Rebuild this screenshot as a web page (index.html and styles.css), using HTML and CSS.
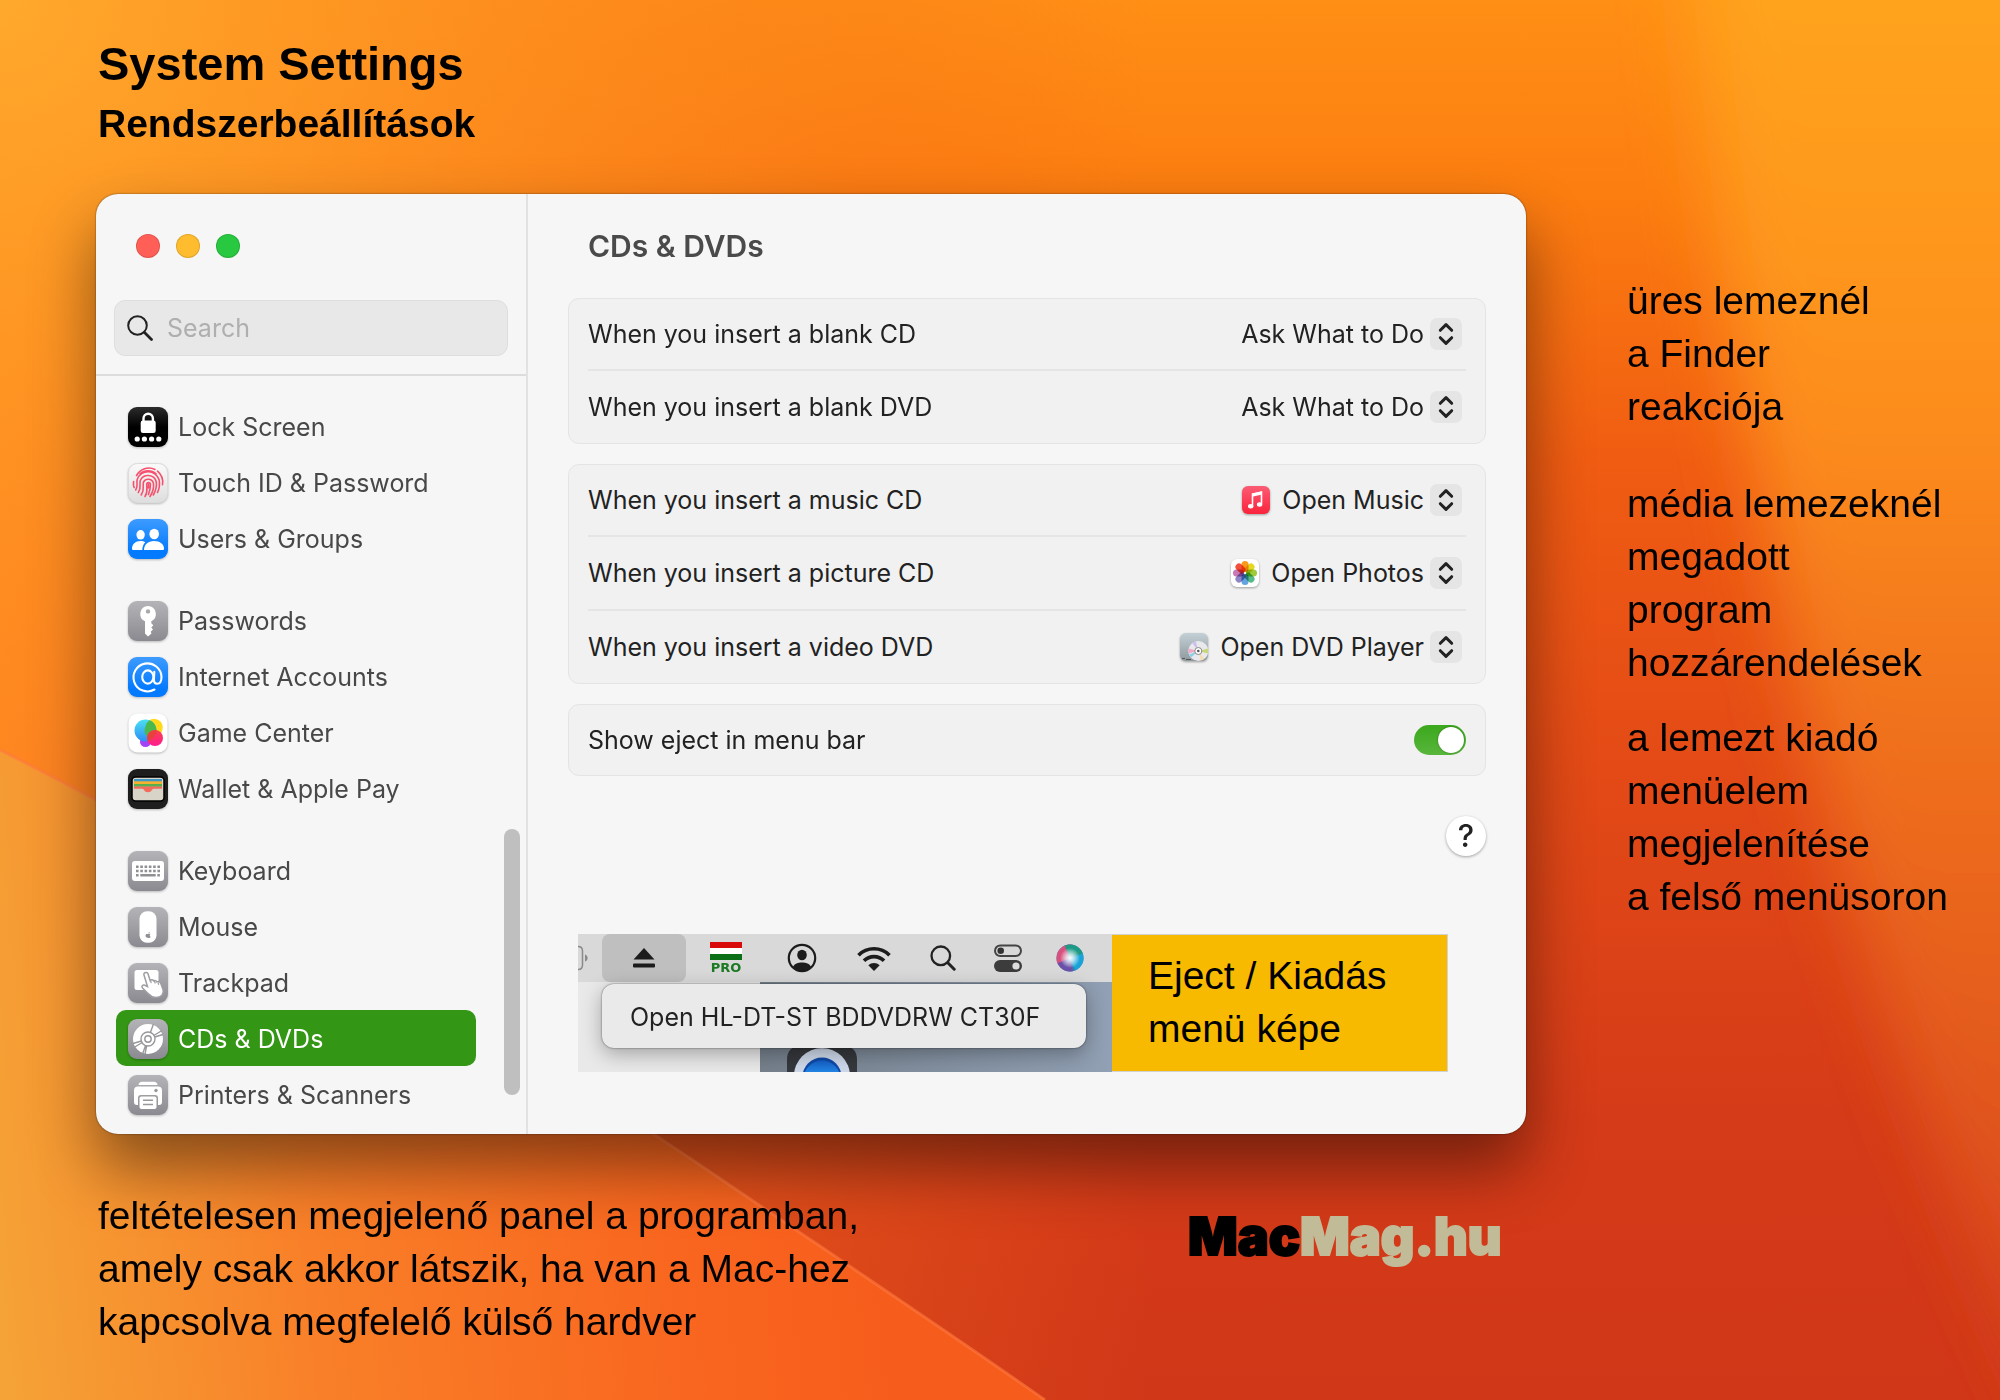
FILE: index.html
```html
<!DOCTYPE html>
<html lang="hu">
<head>
<meta charset="utf-8">
<title>System Settings – CDs &amp; DVDs</title>
<link rel="stylesheet" href="styles.css">
</head>
<body>
<svg class="wallpaper" viewBox="0 0 2000 1400" preserveAspectRatio="none" aria-hidden="true">
  <defs>
    <linearGradient id="sky" x1="0" y1="0" x2="0" y2="1"><stop offset="0" stop-color="#ff8f15"/><stop offset=".14" stop-color="#fc7d10"/><stop offset=".33" stop-color="#f05c12"/><stop offset=".55" stop-color="#e34a16"/><stop offset=".8" stop-color="#d53b18"/><stop offset="1" stop-color="#d03718"/></linearGradient>
    <radialGradient id="tl" gradientUnits="userSpaceOnUse" cx="0" cy="0" r="900"><stop offset="0" stop-color="#ffa92c"/><stop offset="1" stop-color="#ff9418" stop-opacity="0"/></radialGradient>
    <linearGradient id="left" gradientUnits="userSpaceOnUse" x1="0" y1="0" x2="1150" y2="0"><stop offset="0" stop-color="#ff8422"/><stop offset="1" stop-color="#f46a1c" stop-opacity="0"/></linearGradient>
    <linearGradient id="rib" gradientUnits="userSpaceOnUse" x1="1850" y1="0" x2="1850" y2="1350"><stop offset="0" stop-color="#ffa31c"/><stop offset=".3" stop-color="#fd8e1c"/><stop offset=".55" stop-color="#f0701e"/><stop offset=".8" stop-color="#e2581f"/><stop offset="1" stop-color="#d8431c"/></linearGradient>
    <linearGradient id="low" gradientUnits="userSpaceOnUse" x1="0" y1="1300" x2="900" y2="1200"><stop offset="0" stop-color="#f5a236"/><stop offset=".35" stop-color="#f97f28"/><stop offset=".75" stop-color="#f9661f"/><stop offset="1" stop-color="#f65c1c"/></linearGradient>
    <filter id="soft" x="-20%" y="-20%" width="140%" height="140%"><feGaussianBlur stdDeviation="34"/></filter>
  </defs>
  <rect width="2000" height="1400" fill="url(#sky)"/>
  <rect width="1150" height="1400" fill="url(#left)"/>
  <rect width="1000" height="900" fill="url(#tl)"/>
  <path d="M1690-100C1700 150 1730 350 1780 600S1880 1050 2060 1450H2150V-100z" fill="url(#rib)" filter="url(#soft)"/>
  <path d="M0 750C220 860 560 1070 700 1165S960 1340 1045 1400H0z" fill="url(#low)"/>
  <path d="M0 750C220 860 560 1070 700 1165S960 1340 1045 1400" fill="none" stroke="#ff7a40" stroke-width="3" opacity=".6"/>
</svg>
<svg class="defs" aria-hidden="true">
  <defs>
    <linearGradient id="grey" x1="0" y1="0" x2="0" y2="1"><stop offset="0" stop-color="#b4b4b8"/><stop offset="1" stop-color="#8a8a90"/></linearGradient>
    <linearGradient id="blue" x1="0" y1="0" x2="0" y2="1"><stop offset="0" stop-color="#3d9bff"/><stop offset=".8" stop-color="#047aff"/></linearGradient>
    <linearGradient id="black" x1="0" y1="0" x2="0" y2="1"><stop offset="0" stop-color="#2c2c2c"/><stop offset=".5" stop-color="#000"/></linearGradient>
    <linearGradient id="white" x1="0" y1="0" x2="0" y2="1"><stop offset="0" stop-color="#fafafa"/><stop offset="1" stop-color="#dedede"/></linearGradient>
    <linearGradient id="red" x1="0" y1="0" x2="0" y2="1"><stop offset="0" stop-color="#fb5c74"/><stop offset="1" stop-color="#fa233b"/></linearGradient>
    <linearGradient id="gcb" x1="0" y1="0" x2="0" y2="1"><stop offset="0" stop-color="#4be0f2"/><stop offset="1" stop-color="#2d8cf5"/></linearGradient>
    <linearGradient id="gcr" x1="0" y1="0" x2="0" y2="1"><stop offset="0" stop-color="#fb4048"/><stop offset="1" stop-color="#ff1c90"/></linearGradient>
    <linearGradient id="steel" x1="0" y1="0" x2="0" y2="1"><stop offset="0" stop-color="#c3d0d6"/><stop offset="1" stop-color="#8f999e"/></linearGradient>
    <linearGradient id="lens" x1="0" y1="0" x2="0" y2="1"><stop offset="0" stop-color="#1560c8"/><stop offset=".5" stop-color="#2a9cf6"/></linearGradient>
    <symbol id="updown" viewBox="0 0 32 32"><path d="M10.300 12.300L16 6.600l5.700 5.700M10.300 19.700L16 25.400l5.700-5.700" fill="none" stroke="#222" stroke-width="3" stroke-linecap="round" stroke-linejoin="round"/></symbol>
  </defs>
</svg>

<div class="page">
  <header class="title">
    <h1>System Settings</h1>
    <p>Rendszerbeállítások</p>
  </header>

  <div class="stage">
    <section class="window">
      <aside class="sidebar">
        <div class="lights">
          <button class="light close" aria-label="Close"></button>
          <button class="light minimise" aria-label="Minimise"></button>
          <button class="light zoom" aria-label="Zoom"></button>
        </div>
        <div class="searchbox">
          <label class="search">
            <svg width="26" height="26" viewBox="0 0 26 26" fill="none" stroke="#222" stroke-linecap="round"><circle cx="10.500" cy="10.500" r="9.300" stroke-width="2"/><path d="M17.500 17.500l7 7" stroke-width="2.800"/></svg>
            <input type="search" placeholder="Search" aria-label="Search">
          </label>
        </div>
        <nav class="list">
          <ul>
            <li><a href="#"><svg class="icon" viewBox="0 0 40 40"><rect width="40" height="40" rx="9" fill="url(#black)"/><path d="M15.500 15v-3.500a4.700 4.700 0 0 1 9.400 0V15" fill="none" stroke="#fff" stroke-width="2.400"/><rect x="12.700" y="13.500" width="15" height="12.500" rx="2.300" fill="#fff"/><g fill="#fff"><circle cx="9.200" cy="32" r="2.600"/><circle cx="16.400" cy="32" r="2.600"/><circle cx="23.600" cy="32" r="2.600"/><circle cx="30.800" cy="32" r="2.600"/></g></svg>Lock Screen</a></li>
            <li><a href="#"><svg class="icon" viewBox="0 0 40 40"><rect x=".5" y=".5" width="39" height="39" rx="9" fill="url(#white)" stroke="#dcdcdc"/><g fill="none" stroke="#f5506e" stroke-width="1.600" stroke-linecap="round"><path d="M8.500 12.500a14 14 0 0 1 18.500-6M29.500 8.200a14.500 14.500 0 0 1 5 13.500M5.600 18.500q-.7 4 .6 6"/><path d="M7.700 27c3-5 .3-6.500 1.500-10.500A11.500 11.500 0 0 1 31.200 17c.8 5 0 9-1.700 12.500"/><path d="M10.300 29.500c3.500-5 .7-8 2-12a8.500 8.500 0 0 1 16 1.500c.8 5-.8 9-3 13"/><path d="M13.200 32c4-6 1-9 2.300-13a5.400 5.400 0 0 1 10 1.500c.5 5-1.500 10-3.500 13"/><path d="M17 33.500c3.500-6 1.500-9 1.700-12.500a1.900 1.900 0 0 1 3.700 0c.2 4-.5 7-2 10.500M20.500 21v4"/><path d="M12 10.800a12 12 0 0 1 16 0"/></g></svg>Touch ID &amp; Password</a></li>
            <li><a href="#"><svg class="icon" viewBox="0 0 40 40"><rect width="40" height="40" rx="9" fill="url(#blue)"/><g fill="#fff"><ellipse cx="12.600" cy="15.800" rx="4.200" ry="4.800"/><ellipse cx="26.200" cy="15" rx="4.800" ry="5.300"/><path d="M4 29.500c0-4 3.500-7.500 8.500-7.500 2 0 3.500.4 4.800 1.200-2 2-3 4.500-3 7.800H5.500C4.500 31 4 30.500 4 29.500z"/><path d="M16 31c0-5.500 4-9 10-9s10 3.500 10 7.500c0 1-.5 1.500-1.500 1.500z"/></g></svg>Users &amp; Groups</a></li>
          </ul>
          <ul>
            <li><a href="#"><svg class="icon" viewBox="0 0 40 40"><rect width="40" height="40" rx="9" fill="url(#grey)"/><path fill="#fff" fill-rule="evenodd" d="M20 5a8 8 0 0 1 3.300 15.200v2l2 2-2 2.300 1.700 2-2.300 2.200.8 1.800L20 35.500 17 32.500V20.300A8 8 0 0 1 20 5zm0 3.200a2.200 2.200 0 1 0 0 4.400 2.200 2.200 0 0 0 0-4.400z"/></svg>Passwords</a></li>
            <li><a href="#"><svg class="icon" viewBox="0 0 40 40"><rect width="40" height="40" rx="9" fill="url(#blue)"/><g fill="none" stroke="#fff" stroke-width="2.100" stroke-linecap="round"><path d="M26.500 32.500a14 14 0 1 1 7-12.500c0 4-1.700 6.800-4.400 6.800-2.300 0-3.200-1.500-3.200-3.700l.4-8.300"/><ellipse cx="19.800" cy="20" rx="5.600" ry="6.600"/></g></svg>Internet Accounts</a></li>
            <li><a href="#"><svg class="icon" viewBox="0 0 40 40"><rect x=".5" y=".5" width="39" height="39" rx="9" fill="#fff"/><circle cx="17.500" cy="28.500" r="5.500" fill="#a343f5"/><circle cx="26" cy="14.500" r="8.800" fill="#ffd91a"/><circle cx="17.500" cy="17.500" r="11" fill="url(#gcb)"/><path d="M28.400 17a11 11 0 0 1-4.400 9 8.800 8.800 0 0 1-6.500-12.500 9 9 0 0 1 4-6.200 11 11 0 0 1 6.900 9.700z" fill="#4bb84e"/><circle cx="27" cy="25" r="8" fill="url(#gcr)"/><path d="M28.400 17.200A11 11 0 0 1 20 28.200a8 8 0 0 1 8.400-11z" fill="#e8403f"/></svg>Game Center</a></li>
            <li><a href="#"><svg class="icon" viewBox="0 0 40 40"><rect width="40" height="40" rx="9" fill="#1e1e1e"/><rect x="4" y="8" width="32" height="24" rx="3.500" fill="#d8d4c8" stroke="#000" stroke-width="1.500"/><path d="M6 10h28v3H6z" fill="#3f97c6"/><path d="M6 12.300h28v2.800H6z" fill="#f5b22e"/><path d="M6 15h28v2.800H6z" fill="#58b04c"/><path d="M6 17.600h28v2.200h-8.500c-1.500 0-1.700 3.500-5.500 3.500s-4-3.500-5.500-3.500H6z" fill="#f26b5b"/></svg>Wallet &amp; Apple Pay</a></li>
          </ul>
          <ul>
            <li><a href="#"><svg class="icon" viewBox="0 0 40 40"><rect width="40" height="40" rx="9" fill="url(#grey)"/><rect x="4" y="10" width="32" height="20" rx="3" fill="#fff"/><path d="M8 15.700h24M8 20h24" stroke="#8f8f94" stroke-width="2.400" stroke-dasharray="2.600 1.680"/><path d="M8 24.300h2.600M12.300 24.300h15.400M29.300 24.300h2.600" stroke="#8f8f94" stroke-width="2.400"/></svg>Keyboard</a></li>
            <li><a href="#"><svg class="icon" viewBox="0 0 40 40"><rect width="40" height="40" rx="9" fill="url(#grey)"/><rect x="11.500" y="4.300" width="17" height="31.500" rx="7.500" fill="#fff"/><path d="M20.300 26.600q.2-1.500 1.500-1.900.1 1.500-1.500 1.900zM20 27.200c1.300-.6 2-.4 2.400.2-1 .7-.8 1.900.2 2.300-.6 1.300-1.200 1.500-2.600 1.100-1.400.3-2.500-.8-2.500-2.200 0-1.300 1.100-2 2.500-1.400z" fill="#8f8f94"/></svg>Mouse</a></li>
            <li><a href="#"><svg class="icon" viewBox="0 0 40 40"><rect width="40" height="40" rx="9" fill="url(#grey)"/><rect x="6.500" y="7" width="24" height="20" rx="2.500" fill="#fff"/><path d="M16 12c-.6-2.600 3.300-3.600 4.100-1l2 6.400c1.300-1 3-.6 3.500.5 1.300-.7 2.900-.3 3.300 1 1.600-.7 3.300-.1 3.900 1.600l2.200 6c1.500 4.500-2 8-7 8-4.500.2-6-2-8.500-4.500l-5-5c-1.500-1.800.3-3.500 2.300-2.700l2.700 1.300z" fill="#fff" stroke="#9d9da2" stroke-width="1.500"/><path d="M22.500 17.500l.8 2.600M26.500 18l.8 2.500M30 19.500l.7 2.200" stroke="#9d9da2" stroke-width="1.200"/></svg>Trackpad</a></li>
            <li><a href="#" class="selected" aria-current="page"><svg class="icon" viewBox="0 0 40 40"><rect width="40" height="40" rx="9" fill="url(#grey)"/><circle cx="20" cy="20" r="15" fill="#fff"/><g stroke="#98989c" stroke-width="1.400" fill="none"><path d="M20 20L25.500 5M20 20L34 11.500M20 20L35 15.500M20 20L14.500 35M20 20L6 28.500M20 20L5 24.500M20 20L17 35"/><circle cx="20" cy="20" r="7" fill="#fff"/><circle cx="20" cy="20" r="3.200"/></g></svg>CDs &amp; DVDs</a></li>
            <li><a href="#"><svg class="icon" viewBox="0 0 40 40"><rect width="40" height="40" rx="9" fill="url(#grey)"/><path d="M10.500 10c0-2 1.500-3.300 3.500-3.300h12c2 0 3.500 1.300 3.500 3.300z" fill="#fff"/><path d="M6 15.500a4 4 0 0 1 4-4h20a4 4 0 0 1 4 4V27a3 3 0 0 1-3 3h-1v-7a3 3 0 0 0-3-3H13a3 3 0 0 0-3 3v7H9a3 3 0 0 1-3-3z" fill="#fff"/><circle cx="28" cy="15.500" r="1.700" fill="#98989c"/><rect x="11.500" y="21.500" width="17" height="12.500" rx="2" fill="#fff"/><path d="M15 25.300h10M15 29.500h10" stroke="#98989c" stroke-width="1.500"/></svg>Printers &amp; Scanners</a></li>
          </ul>
          <span class="scrollbar"></span>
        </nav>
      </aside>

      <main class="content">
        <h2>CDs &amp; DVDs</h2>
        <div class="card">
          <div class="row"><span id="l1">When you insert a blank CD</span><button class="popup" aria-describedby="l1">Ask What to Do<svg class="step"><use href="#updown"/></svg></button></div>
          <div class="row"><span id="l2">When you insert a blank DVD</span><button class="popup" aria-describedby="l2">Ask What to Do<svg class="step"><use href="#updown"/></svg></button></div>
        </div>
        <div class="card">
          <div class="row"><span id="l3">When you insert a music CD</span><button class="popup" aria-describedby="l3"><svg class="app" viewBox="0 0 28 28"><rect width="28" height="28" rx="6" fill="url(#red)"/><path d="M10.500 19.500V8.200l9-2v11.500" fill="none" stroke="#fff" stroke-width="1.600"/><path d="M10 7.500l10-2.200v3.200l-10 2.200z" fill="#fff"/><ellipse cx="8.700" cy="20.300" rx="2.700" ry="2.200" fill="#fff"/><ellipse cx="17.600" cy="18.500" rx="2.700" ry="2.200" fill="#fff"/></svg>Open Music<svg class="step"><use href="#updown"/></svg></button></div>
          <div class="row"><span id="l4">When you insert a picture CD</span><button class="popup" aria-describedby="l4"><svg class="app" viewBox="0 0 28 28"><rect width="28" height="28" rx="6" fill="#fff"/><g class="petals"><rect x="10.500" y="2" width="7" height="11" rx="3.500" fill="#f99a1c"/><rect x="10.500" y="2" width="7" height="11" rx="3.500" fill="#e5d81f" transform="rotate(45 14 14)"/><rect x="10.500" y="2" width="7" height="11" rx="3.500" fill="#9dcb3b" transform="rotate(90 14 14)"/><rect x="10.500" y="2" width="7" height="11" rx="3.500" fill="#56b98a" transform="rotate(135 14 14)"/><rect x="10.500" y="2" width="7" height="11" rx="3.500" fill="#62a4e0" transform="rotate(180 14 14)"/><rect x="10.500" y="2" width="7" height="11" rx="3.500" fill="#8f84c4" transform="rotate(225 14 14)"/><rect x="10.500" y="2" width="7" height="11" rx="3.500" fill="#c878b4" transform="rotate(270 14 14)"/><rect x="10.500" y="2" width="7" height="11" rx="3.500" fill="#f0503c" transform="rotate(315 14 14)"/></g></svg>Open Photos<svg class="step"><use href="#updown"/></svg></button></div>
          <div class="row"><span id="l5">When you insert a video DVD</span><button class="popup" aria-describedby="l5"><svg class="app" viewBox="0 0 28 28"><rect width="28" height="28" rx="6" fill="url(#steel)"/><path d="M2 25.500h3M6 26.500h5" stroke="#555" stroke-width="1"/><circle cx="18.300" cy="18" r="10" fill="#e9e9ec"/><path d="M18.300 18L8.500 15.500v5z" fill="#f0aac8"/><path d="M18.300 18l9.800-2.500v5z" fill="#c7d77a"/><path d="M18.300 18l-6-8 3.500-1.500z" fill="#cdbdf0"/><path d="M18.300 18l6 8-3.500 1.500z" fill="#f6ddb0"/><path d="M18.300 18L9 21.500l2 3z" fill="#8bd0e8"/><circle cx="18.300" cy="18" r="3.500" fill="#fff" stroke="#888"/><circle cx="18.300" cy="18" r="1.300" fill="#555"/></svg>Open DVD Player<svg class="step"><use href="#updown"/></svg></button></div>
        </div>
        <div class="card">
          <div class="row"><label for="eject">Show eject in menu bar</label><input id="eject" class="toggle" type="checkbox" role="switch" checked></div>
        </div>
        <button class="help" aria-label="Help">?</button>

        <figure class="figure">
          <div class="shot">
            <div class="menubar">
              <svg class="battery" viewBox="0 0 10 26"><path d="M0 1.500c3 0 4.500 1.500 4.500 4.500v14c0 3-1.500 4.500-4.500 4.500" fill="none" stroke="#8a8a8a" stroke-width="1.500"/><path d="M7 9.500c3.500 1 3.500 6 0 7z" fill="#8a8a8a"/></svg>
              <span class="ejectitem"><svg width="22" height="20" viewBox="0 0 22 20" fill="#1c1c1c"><path d="M11 0l10.500 11.500H.5z"/><rect y="15.500" width="22" height="4" rx="1"/></svg></span>
              <span class="flag"><i></i><b>PRO</b></span>
              <svg class="mi user" width="30" height="30" viewBox="0 0 30 30"><circle cx="15" cy="15" r="13.200" fill="none" stroke="#1c1c1c" stroke-width="2.200"/><ellipse cx="15" cy="12" rx="4.800" ry="5.300" fill="#1c1c1c"/><path d="M6 24c1.500-3.500 5-4.500 9-4.500s7.500 1 9 4.500c-4.500 5-13.500 5-18 0z" fill="#1c1c1c"/></svg>
              <svg class="mi wifi" width="34" height="26" viewBox="0 0 34 26" fill="none" stroke="#1c1c1c" stroke-width="3.600"><path d="M1.500 10.200a22 22 0 0 1 31 0M7 15.800a14 14 0 0 1 20 0"/><path d="M11.300 20.200a8.300 8.300 0 0 1 11.400 0L17 26z" fill="#1c1c1c" stroke="none"/></svg>
              <svg class="mi lens" width="26" height="26" viewBox="0 0 26 26" fill="none" stroke="#222" stroke-linecap="round"><circle cx="10.800" cy="10.800" r="9.300" stroke-width="2.300"/><path d="M17.800 17.800l6.400 6.400" stroke-width="3"/></svg>
              <svg class="mi cc" width="28" height="28" viewBox="0 0 28 28"><rect x="1" y="1.500" width="26" height="10.500" rx="5.250" fill="none" stroke="#444" stroke-width="2"/><circle cx="6.700" cy="6.700" r="3.300" fill="#333"/><rect y="16" width="28" height="12" rx="6" fill="#3c3c3c"/><circle cx="22" cy="22" r="3.600" fill="#ddd"/></svg>
              <svg class="mi siri" width="28" height="28" viewBox="0 0 28 28"><defs><radialGradient id="glow"><stop offset="0" stop-color="#fff"/><stop offset=".35" stop-color="#e8f4fb" stop-opacity=".8"/><stop offset="1" stop-color="#fff" stop-opacity="0"/></radialGradient><clipPath id="ball"><circle cx="14" cy="14" r="13.500"/></clipPath></defs><g clip-path="url(#ball)"><rect width="28" height="28" fill="#3a78b8"/><path d="M0 0h17L13 14 0 24z" fill="#d8507e"/><path d="M8 0h20v12L14 14z" fill="#1d9a86"/><path d="M14 14l14-5v12l-8 7z" fill="#18a4d8"/><path d="M0 20l14-6 3 14H0z" fill="#6a50a8"/><circle cx="14" cy="14" r="10" fill="url(#glow)"/></g></svg>
            </div>
            <div class="desktop">
              <svg class="dockicon" width="70" height="26" viewBox="0 0 70 26"><path d="M0 26V14Q0 0 14 0h42q14 0 14 14v12z" fill="#35383c"/><circle cx="35" cy="30" r="28" fill="#cfd9ea"/><circle cx="35" cy="31" r="19.500" fill="#0f4aa8"/><circle cx="35" cy="33" r="18.500" fill="url(#lens)"/></svg>
              <button class="menuitem">Open HL-DT-ST BDDVDRW CT30F</button>
            </div>
          </div>
          <figcaption>Eject / Kiadás<br>menü képe</figcaption>
        </figure>
      </main>
    </section>

    <aside class="notes">
      <p>üres lemeznél<br>a Finder<br>reakciója</p>
      <p class="media">média lemezeknél<br>megadott<br>program<br>hozzárendelések</p>
      <p>a lemezt kiadó<br>menüelem<br>megjelenítése<br>a felső menüsoron</p>
    </aside>
  </div>

  <footer class="footer">
    <p>feltételesen megjelenő panel a programban,<br>amely csak akkor látszik, ha van a Mac-hez<br>kapcsolva megfelelő külső hardver</p>
    <a class="logo" href="#">Mac<span>Mag.hu</span></a>
  </footer>
</div>
</body>
</html>
```
FILE: styles.css
```css
* { box-sizing: border-box; }
body {
  margin: 0;
  min-height: 100vh;
  background: #f0701a;
  color: #000;
  font-family: "Liberation Sans", Arial, sans-serif;
  font-size: 39px;
  line-height: 53px;
}
h1, h2, p, ul, figure { margin: 0; padding: 0; }
ul { list-style: none; }
button, input { font: inherit; color: inherit; border: 0; background: none; padding: 0; margin: 0; }
a { color: inherit; text-decoration: none; }

.wallpaper { position: fixed; inset: 0; width: 100%; height: 100%; z-index: -1; }
.defs { position: absolute; width: 0; height: 0; }

.page { padding: 34px 48px 24px 96px; }
.title { padding-left: 2px; height: 160px; font-weight: 700; }
.title h1 { font-size: 47px; line-height: 60px; }
.title p { line-height: 60px; }

.stage { display: grid; grid-template-columns: minmax(0, 1430fr) minmax(0, 325fr); column-gap: 101px; }

.window {
  display: grid;
  grid-template-columns: 432px minmax(0, 1fr);
  min-height: 940px;
  border-radius: 22px;
  background: #f6f6f6;
  box-shadow: 0 0 2px rgba(0,0,0,.6), 0 34px 64px rgba(0,0,0,.46);
  overflow: hidden;
  font-family: Inter, "Noto Sans", sans-serif;
  font-size: 25px;
  line-height: 32px;
  color: #222;
}

.sidebar { display: flex; flex-direction: column; border-right: 2px solid #e2e2e2; color: #484848; }
.lights { display: flex; gap: 16px; padding: 40px 40px 42px; }
.light { width: 24px; height: 24px; border-radius: 50%; box-shadow: inset 0 0 0 1px rgba(0,0,0,.12); }
.close { background: #ff5f57; }
.minimise { background: #febc2e; }
.zoom { background: #28c840; }
.searchbox { padding: 0 18px 18px; border-bottom: 2px solid #dcdcdc; }
.search { display: flex; align-items: center; gap: 14px; height: 56px; padding: 0 12px; border: 1px solid #dedede; border-radius: 11px; background: #e8e8e8; }
.search svg { flex: none; }
.search input { flex: 1; min-width: 0; outline: 0; appearance: none; }
.search input::placeholder { color: #afafaf; opacity: 1; }

.list { position: relative; flex: 1; display: flex; flex-direction: column; gap: 26px; padding: 22px 50px 12px 20px; }
.list a { display: flex; align-items: center; gap: 10px; height: 56px; padding: 1px 12px 0; border-radius: 10px; white-space: nowrap; }
.list .selected { background: #339614; color: #fff; }
.icon { width: 40px; height: 40px; flex: none; filter: drop-shadow(0 1px 1px rgba(0,0,0,.25)); }
.scrollbar { position: absolute; right: 6px; bottom: 39px; width: 16px; height: 266px; border-radius: 8px; background: #bfbfbf; }

.content { display: flex; flex-direction: column; gap: 20px; padding: 32px 40px 60px; }
.content h2 { padding: 0 20px; margin-bottom: 12px; font-size: 30px; line-height: 40px; font-weight: 600; color: #4a4a4a; }
.card { padding: 0 19px; border: 1px solid #e4e4e4; border-radius: 11px; background: #f1f1f1; }
.row { display: flex; align-items: center; justify-content: space-between; height: 70px; }
.row + .row { height: 74px; border-top: 2px solid #e5e5e5; }
.popup { display: flex; align-items: center; padding-right: 4px; }
.step { width: 32px; height: 32px; margin-left: 6px; border-radius: 7px; background: #e5e5e5; }
.app { width: 28px; height: 28px; margin-right: 12px; filter: drop-shadow(0 1px 1px rgba(0,0,0,.35)); }
.petals rect { mix-blend-mode: multiply; }
.toggle { appearance: none; width: 52px; height: 30px; padding: 2px; border-radius: 15px; background: linear-gradient(#3ba81c, #58b63c); }
.toggle::before { content: ""; display: block; width: 26px; height: 26px; margin-left: auto; border-radius: 50%; background: #fff; box-shadow: 0 0 2px rgba(0,0,0,.4); }
.help { align-self: flex-end; width: 40px; height: 40px; margin: 20px 0 58px; border-radius: 50%; background: #fff; font-size: 31px; line-height: 40px; font-weight: 500; text-align: center; box-shadow: 0 1px 3px rgba(0,0,0,.35); }

.figure { display: flex; margin: 0 38px 0 10px; height: 138px; }
.shot { flex: 0 0 534px; display: flex; flex-direction: column; overflow: hidden; }
.menubar { display: flex; align-items: center; height: 48px; background: #d9d9d9; }
.battery { width: 10px; height: 26px; margin-right: 14px; }
.ejectitem { display: flex; align-items: center; justify-content: center; width: 84px; height: 48px; border-radius: 8px; background: #bfbfbf; }
.flag { display: flex; flex-direction: column; align-items: center; margin-left: 24px; width: 32px; }
.flag i { width: 32px; height: 18px; background: linear-gradient(#d90a0a 0 33%, #fff 33% 66%, #0b6f18 66%); }
.flag b { font: 700 13px/15px "DejaVu Sans", sans-serif; color: #1c7a24; }
.mi { flex: none; }
.user { margin-left: 45px; }
.wifi { margin-left: 40px; }
.lens { margin-left: 39px; }
.cc { margin-left: 38px; }
.siri { margin-left: 34px; }
.desktop { position: relative; flex: 1; background: linear-gradient(90deg, #e9e9e9 182px, transparent 182px), linear-gradient(90deg, #75808c 182px, #91a0b4); }
.dockicon { position: absolute; left: 209px; bottom: 0; }
.menuitem { position: absolute; left: 24px; top: 2px; width: 484px; height: 64px; padding: 1px 28px 0; border-radius: 12px; background: #eaeaea; text-align: left; white-space: nowrap; box-shadow: 0 0 2px rgba(0,0,0,.6), 0 6px 20px rgba(0,0,0,.3); }
.figure figcaption { flex: 1; padding: 14px 36px; border: 1px solid #d2d2d2; border-left: 0; background: #f8ba00; color: #000; font: 39px/53px "Liberation Sans", Arial, sans-serif; white-space: nowrap; }

.notes { display: flex; flex-direction: column; gap: 22px; padding-top: 80px; white-space: nowrap; }
.media { margin-top: 22px; }

.footer { display: flex; align-items: flex-start; padding: 55px 0 0 2px; }
.footer p { flex: 0 0 1090px; }
.logo { padding-top: 18px; font: 900 52px/60px Inter, sans-serif; -webkit-text-stroke: 2px currentColor; }
.logo span { color: #c2bb98; }
```
